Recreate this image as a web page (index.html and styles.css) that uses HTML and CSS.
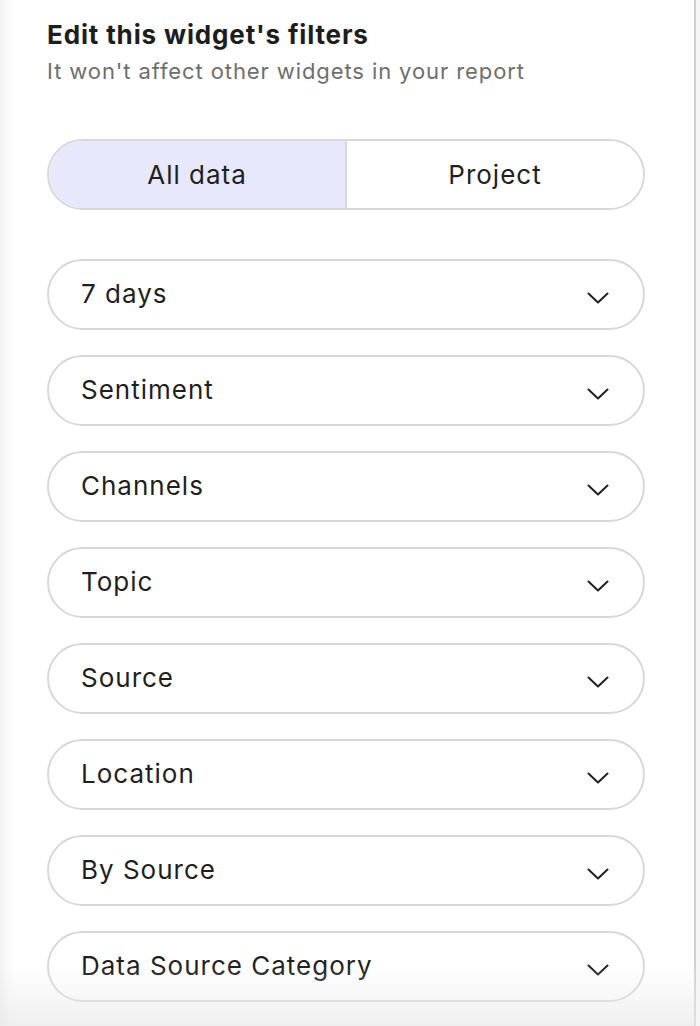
FILE: index.html
```html
<!DOCTYPE html>
<html>
<head>
<meta charset="utf-8">
<link rel="stylesheet" href="styles.css">
</head>
<body>
<div class="frame">
  <div class="panel">
    <div class="header">
      <h1 class="title">Edit this widget's filters</h1>
      <p class="subtitle">It won't affect other widgets in your report</p>
    </div>
    <div class="toggle">
      <button class="seg seg-active">All data</button>
      <button class="seg">Project</button>
    </div>
    <div class="filters">
      <div class="select"><span>7 days</span><svg class="chev" viewBox="0 0 22 12"><path d="M1.5 1.5 L11 10.5 L20.5 1.5"/></svg></div>
      <div class="select"><span>Sentiment</span><svg class="chev" viewBox="0 0 22 12"><path d="M1.5 1.5 L11 10.5 L20.5 1.5"/></svg></div>
      <div class="select"><span>Channels</span><svg class="chev" viewBox="0 0 22 12"><path d="M1.5 1.5 L11 10.5 L20.5 1.5"/></svg></div>
      <div class="select"><span>Topic</span><svg class="chev" viewBox="0 0 22 12"><path d="M1.5 1.5 L11 10.5 L20.5 1.5"/></svg></div>
      <div class="select"><span>Source</span><svg class="chev" viewBox="0 0 22 12"><path d="M1.5 1.5 L11 10.5 L20.5 1.5"/></svg></div>
      <div class="select"><span>Location</span><svg class="chev" viewBox="0 0 22 12"><path d="M1.5 1.5 L11 10.5 L20.5 1.5"/></svg></div>
      <div class="select"><span>By Source</span><svg class="chev" viewBox="0 0 22 12"><path d="M1.5 1.5 L11 10.5 L20.5 1.5"/></svg></div>
      <div class="select"><span>Data Source Category</span><svg class="chev" viewBox="0 0 22 12"><path d="M1.5 1.5 L11 10.5 L20.5 1.5"/></svg></div>
    </div>
  </div>
  <div class="bottom-shade"></div>
</div>
</body>
</html>
```
FILE: styles.css
```css
* { box-sizing: border-box; }
html, body { margin: 0; padding: 0; }
body {
  background: #f4f4f4;
  font-family: Inter, "Noto Sans", sans-serif;
  color: #1f1f1f;
}
.frame {
  position: relative;
  width: 700px;
  height: 1026px;
  overflow: hidden;
  background: #f5f5f5;
}
.panel {
  width: 696px;
  height: 1026px;
  border-right: 2px solid #d2d2d2;
  background: linear-gradient(to right, #f1f1f1 0px, #fbfbfb 8px, #ffffff 16px);
  padding: 0 49px 0 47px;
}
.header { padding-top: 19px; }
.title {
  margin: 0;
  font-size: 26px;
  font-weight: 700;
  line-height: 32px;
  color: #1d1d1d;
  letter-spacing: 0.85px;
}
.subtitle {
  margin: 6px 0 0;
  font-size: 22px;
  line-height: 28px;
  color: #6e6e6e;
  letter-spacing: 0.9px;
}
.toggle {
  margin-top: 54px;
  display: flex;
  height: 71px;
  border: 2px solid #d8d8d8;
  border-radius: 36px;
  overflow: hidden;
  background: #fff;
}
.seg {
  flex: 1;
  border: 0;
  background: #fff;
  font-family: inherit;
  font-size: 26px;
  letter-spacing: 1px;
  color: #1f1f1f;
  padding: 0;
}
.seg-active {
  background: #e7e8fb;
  border-right: 2px solid #d8d8d8;
}
.filters {
  margin-top: 49px;
  display: flex;
  flex-direction: column;
  gap: 25px;
}
.select {
  height: 71px;
  border: 2px solid #d8d8d8;
  border-radius: 36px;
  background: #fff;
  display: flex;
  align-items: center;
  justify-content: space-between;
  padding: 0 34px 0 32px;
  font-size: 26px;
  letter-spacing: 1px;
  color: #1f1f1f;
}
.select span { margin-top: -3px; }
.chev {
  width: 22px;
  height: 12px;
  margin-top: 6px;
}
.chev path {
  fill: none;
  stroke: #222;
  stroke-width: 2;
  stroke-linecap: round;
  stroke-linejoin: round;
}
.bottom-shade {
  position: absolute;
  left: 0;
  right: 4px;
  bottom: 0;
  height: 60px;
  background: linear-gradient(to bottom, rgba(230,230,230,0) 0%, rgba(232,232,232,0.4) 60%, rgba(228,228,228,0.6) 100%);
  pointer-events: none;
}
```
